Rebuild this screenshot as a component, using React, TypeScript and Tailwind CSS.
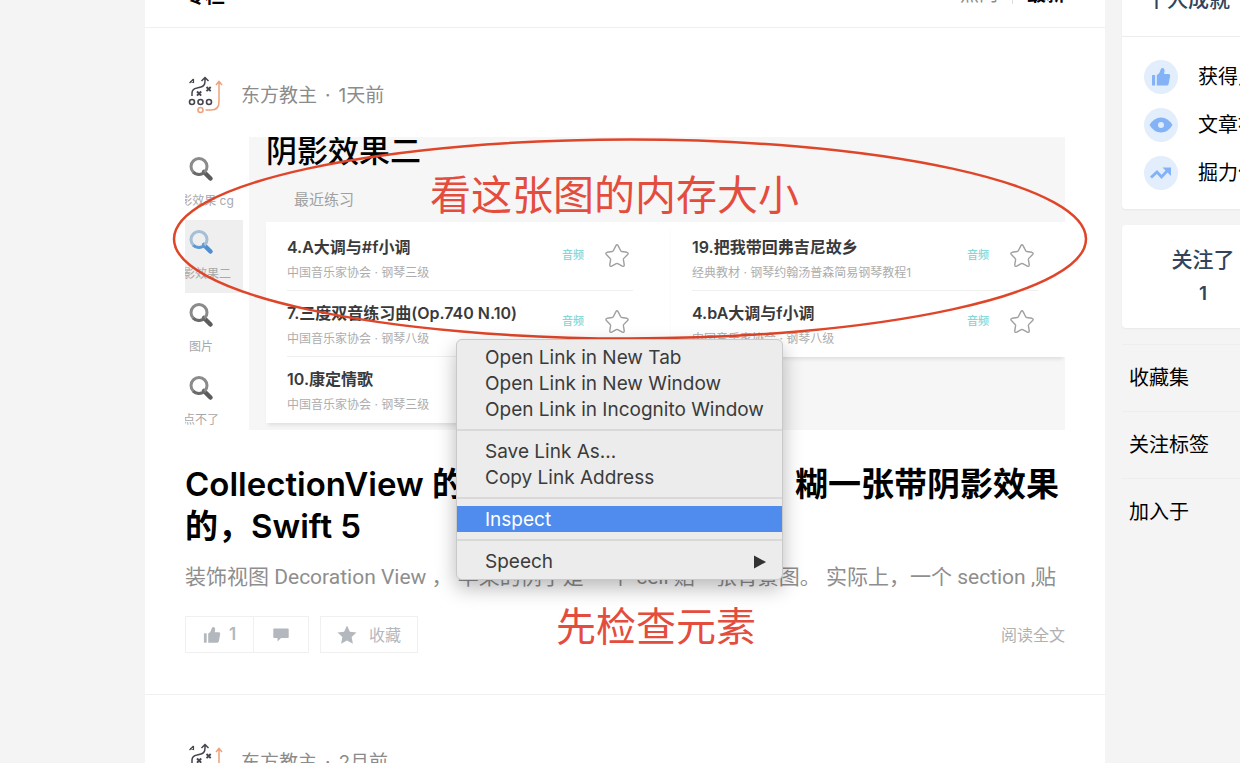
import { Fragment } from "react";
import clsx from "clsx";

type Song = { title: string; sub: string; tagged: boolean };

const leftSongs: Song[] = [
  { title: "4.A大调与#f小调", sub: "中国音乐家协会 · 钢琴三级", tagged: true },
  { title: "7.三度双音练习曲(Op.740 N.10)", sub: "中国音乐家协会 · 钢琴八级", tagged: true },
  { title: "10.康定情歌", sub: "中国音乐家协会 · 钢琴三级", tagged: false },
];

const rightSongs: Song[] = [
  { title: "19.把我带回弗吉尼故乡", sub: "经典教材 · 钢琴约翰汤普森简易钢琴教程1", tagged: true },
  { title: "4.bA大调与f小调", sub: "中国音乐家协会 · 钢琴八级", tagged: true },
];

const previewTabs = ["阴影效果 cg", "阴影效果二", "图片", "点不了"];

const menuGroups = [
  ["Open Link in New Tab", "Open Link in New Window", "Open Link in Incognito Window"],
  ["Save Link As...", "Copy Link Address"],
  ["Inspect"],
  ["Speech"],
];

function Avatar() {
  return (
    <svg viewBox="0 0 40 40" className="size-10" fill="none" aria-hidden="true">
      <g stroke="#45454f" strokeWidth="1.5">
        <path d="M7 21v-3q0-4 5-5l4-1q4-1 4-6V3M16.500 6l3.500-3.500L23.500 6" />
        <path d="M4.500 8l4-4M5 6.500l3.500 1V4" strokeWidth="1.200" />
        <path d="M12 16.500l4.200 4.200M16.200 16.500l-4.200 4.200M21.500 12l4.200 4.200M25.700 12l-4.200 4.200" strokeWidth="1.900" />
        <circle cx="7" cy="27" r="2.500" strokeWidth="1.600" />
        <circle cx="15.500" cy="27" r="2.500" strokeWidth="1.600" />
        <circle cx="24" cy="27" r="2.500" strokeWidth="1.600" />
      </g>
      <g stroke="#eba27c" strokeWidth="1.500">
        <circle cx="15.500" cy="35" r="2.500" strokeWidth="1.600" />
        <path d="M20.500 35H26q8 0 8-8V7M31 10l3-3.500 3 3.500" />
      </g>
    </svg>
  );
}

function Magnifier({ active }: { active: boolean }) {
  return (
    <svg viewBox="0 0 28 28" className="size-7" fill="none" aria-hidden="true">
      <path d="M17 17l6.500 6.500" stroke={active ? "#4f8fd0" : "#5c5c5c"} strokeWidth="4.500" strokeLinecap="round" />
      <circle cx="12" cy="11.500" r="8" stroke={active ? "#a5bfd6" : "#8b8b8b"} strokeWidth="3" />
      <path d="M6.300 17.200a8 8 0 0 0 11.400 0" stroke={active ? "#5f98d2" : "#6a6a6a"} strokeWidth="3" />
    </svg>
  );
}

function OutlineStar() {
  return (
    <svg viewBox="0 0 24 24" className="size-[26px]" fill="none" stroke="#a0a0a0" strokeWidth="1.300" strokeLinejoin="round" aria-hidden="true">
      <path d="M10.900 2.600q1.100-1.900 2.200 0l2.300 4.600q.3.600 1 .7l4.700.7q1.900.5.700 2l-3.500 3.600q-.5.500-.4 1.200l.8 4.700q0 2-1.800 1.300L12.700 19q-.7-.3-1.400 0l-4.200 2.400q-1.800.7-1.800-1.300l.8-4.700q.1-.7-.4-1.200l-3.500-3.600q-1.200-1.500.7-2l4.700-.7q.7-.1 1-.7z" />
    </svg>
  );
}

function ThumbIcon({ className }: { className: string }) {
  return (
    <svg viewBox="0 0 20 20" className={className} fill="currentColor" aria-hidden="true">
      <path d="M1 8.500Q1 8 1.500 8H3.600q.5 0 .5.500V18q0 .5-.5.500H1.500Q1 18.500 1 18z" />
      <path d="M5.800 8.300Q9 6.500 9.500 3q.3-2 1.900-2 2.400.3 2.100 3.500L13 7h4.600q1.800.2 1.500 2l-1.500 8q-.4 1.500-1.900 1.500H5.800z" />
    </svg>
  );
}

function EyeIcon() {
  return (
    <svg viewBox="0 0 24 16" className="w-6" aria-hidden="true">
      <path d="M0.500 8Q5 .5 12 .5T23.500 8Q19 15.500 12 15.500T.5 8z" fill="currentColor" />
      <circle cx="12" cy="8" r="3" fill="#dfecfb" />
    </svg>
  );
}

function TrendIcon() {
  return (
    <svg viewBox="0 0 22 14" className="w-[22px]" fill="none" aria-hidden="true">
      <path d="M1 11.500l6-5.500 4.500 5L18 4" stroke="currentColor" strokeWidth="2.800" />
      <path d="M12.500 1.500H21V10z" fill="currentColor" />
    </svg>
  );
}

function AuthorLine({ time }: { time: string }) {
  return (
    <div className="flex h-10 items-center gap-4 text-[19px] text-[#8b8b8b]">
      <Avatar />
      <div className="flex items-center gap-2 pt-0.5">
        <a href="#">东方教主</a>
        <span>·</span>
        <span>{time}</span>
      </div>
    </div>
  );
}

function SongList({ songs }: { songs: Song[] }) {
  return (
    <ul className="bg-white pl-[21px] pt-[3px] shadow-[0_4px_4px_-2px_rgba(0,0,0,0.1)]">
      {songs.map((song, i) => (
        <li
          key={song.title}
          className={clsx(
            "flex h-[66px] w-[346px] items-center border-b pt-1",
            i === songs.length - 1 ? "border-white" : "border-[#efefef]"
          )}
        >
          <div className="min-w-0 flex-1 whitespace-nowrap">
            <p className="text-base leading-[26px] font-semibold text-[#3a3a3a]">{song.title}</p>
            <p className="text-xs leading-[26px] text-[#adadad]">{song.sub}</p>
          </div>
          {song.tagged && (
            <div className="flex items-center gap-5 pr-[3px] pb-2">
              <span className="text-[11px] font-medium text-[#84d8d8]">音频</span>
              <OutlineStar />
            </div>
          )}
        </li>
      ))}
    </ul>
  );
}

function Preview() {
  return (
    <div className="flex h-[293px] overflow-hidden">
      <ul className="w-16 shrink-0 pt-[10px]">
        {previewTabs.map((tab, i) => (
          <li key={tab} className={clsx("h-[73px] w-[58px] pt-2", i === 1 && "bg-[#efefef]")}>
            <div className="flex w-8 flex-col items-center gap-2">
              <Magnifier active={i === 1} />
              <span className="text-xs leading-5 whitespace-nowrap text-[#a8a8a8]">{tab}</span>
            </div>
          </li>
        ))}
      </ul>
      <div className="min-w-0 flex-1 bg-[#f6f6f6] pl-[17px]">
        <p className="-mt-2 text-[31px] leading-[44px] font-medium text-black">阴影效果二</p>
        <p className="mt-4 pl-7 text-[15px] leading-[22px] text-[#a0a0a0]">最近练习</p>
        <div className="mt-[11px] grid grid-cols-[405px_1fr] items-start">
          <SongList songs={leftSongs} />
          <SongList songs={rightSongs} />
        </div>
      </div>
    </div>
  );
}

function ContextMenu() {
  return (
    <div
      role="menu"
      className="absolute top-[311px] left-[311px] w-[327px] rounded-md border border-[#c9c9c9] bg-[#ececec] pt-1 pb-[5px] font-['Inter','Noto_Sans_CJK_SC',sans-serif] text-[19px] text-[#3b3b3b] shadow-[0_8px_20px_rgba(0,0,0,0.28)]"
    >
      {menuGroups.map((group, i) => (
        <Fragment key={group[0]}>
          {i > 0 && <hr className="my-[7px] border-t-2 border-[#d9d9d9]" />}
          {group.map((label) => (
            <button
              key={label}
              type="button"
              role="menuitem"
              className={clsx(
                "flex h-[26px] w-full items-center justify-between pt-0.5 pr-4 pl-7 whitespace-nowrap",
                label === "Inspect" && "bg-[#508cee] text-white"
              )}
            >
              {label}
              {label === "Speech" && (
                <svg viewBox="0 0 12 14" className="h-3.5 w-3" aria-hidden="true">
                  <path d="M0 0.500L12 7L0 13.500z" fill="#333" />
                </svg>
              )}
            </button>
          ))}
        </Fragment>
      ))}
    </div>
  );
}

function Article() {
  return (
    <article className="relative border-b border-[#f0f0f0] px-10 pt-[47px] pb-[41px]">
      <AuthorLine time="1天前" />
      <div className="relative mt-[22px]">
        <Preview />
        <svg
          viewBox="0 0 916 204"
          preserveAspectRatio="none"
          className="absolute top-0 -left-[13px] h-[204px] w-[calc(100%+36px)]"
          fill="none"
          aria-hidden="true"
        >
          <ellipse cx="458" cy="102" rx="456" ry="99.500" stroke="#df4529" strokeWidth="2.500" />
        </svg>
        <p className="absolute top-7 left-[245px] text-[41px] leading-[60px] whitespace-nowrap text-[#e44d3e]">看这张图的内存大小</p>
      </div>
      <h2 className="mt-[33px] text-[33px] leading-[42px] font-semibold text-black">
        <a href="#">CollectionView 的装饰视图使用小例子，糊一张带阴影效果的，Swift 5</a>
      </h2>
      <p className="mt-4 overflow-hidden font-['Roboto','Noto_Sans_CJK_SC',sans-serif] text-[21px] leading-7 whitespace-nowrap text-[#8e8e8e]">
        装饰视图 Decoration View ， 苹果的例子是 一个 cell 贴一张背景图。 实际上，一个 section ,贴
      </p>
      <div className="mt-[25px] flex h-[37px] items-stretch text-base text-[#b2b8bd]">
        <button type="button" className="flex w-[69px] items-center justify-center gap-2 border border-[#f0f0f0] text-[17px] font-semibold">
          <ThumbIcon className="size-[18px]" />1
        </button>
        <button type="button" aria-label="评论" className="flex w-[55px] items-center justify-center border border-l-0 border-[#f0f0f0]">
          <svg viewBox="0 0 16 14" className="h-3.5 w-4" fill="currentColor" aria-hidden="true">
            <path d="M1 0.500H15q.7 0 .7.700v8q0 .7-.7.700H8L4.500 13.500V9.900H1q-.7 0-.7-.7v-8Q.3.5 1 .5z" />
          </svg>
        </button>
        <button type="button" className="ml-[11px] flex w-[98px] items-center justify-center gap-3 border border-[#f0f0f0]">
          <svg viewBox="0 0 20 20" className="size-5" fill="currentColor" aria-hidden="true">
            <path d="M10 .5l2.900 6.200 6.600.8-4.900 4.600 1.300 6.700L10 15.500l-5.900 3.300 1.300-6.700L.5 7.500l6.600-.8z" />
          </svg>
          收藏
        </button>
        <a href="#" className="ml-auto self-center text-[#b0b0b0]">阅读全文</a>
      </div>
      <p className="absolute top-[569px] left-[411px] text-[40px] leading-[60px] whitespace-nowrap text-[#e44d3e]">先检查元素</p>
      <ContextMenu />
    </article>
  );
}

function Sidebar() {
  const stats = [
    { label: "获得点赞", icon: <ThumbIcon className="size-5" /> },
    { label: "文章被阅读", icon: <EyeIcon /> },
    { label: "掘力值", icon: <TrendIcon /> },
  ];

  return (
    <aside className="w-[118px] shrink-0">
      <div className="w-[324px]">
        <section className="rounded-sm bg-white pb-3 shadow-[0_1px_2px_rgba(0,0,0,0.05)]">
          <h2 className="flex h-[73px] items-center border-b border-[#ececec] pl-6 text-[21px] font-medium text-[#31445b]">个人成就</h2>
          <ul className="pt-4 text-xl text-black">
            {stats.map((stat) => (
              <li key={stat.label} className="flex h-12 items-center gap-5 pl-[22px]">
                <span className="flex size-[34px] items-center justify-center rounded-full bg-[#e2eefc] text-[#83b2f7]">{stat.icon}</span>
                {stat.label}
              </li>
            ))}
          </ul>
        </section>
        <section className="mt-4 grid h-[103px] grid-cols-2 rounded-sm bg-white text-center font-medium text-[#31445b] shadow-[0_1px_2px_rgba(0,0,0,0.05)]">
          {["关注了", "关注者"].map((label) => (
            <a key={label} href="#" className="pt-[19px]">
              <p className="text-[21px] leading-8">{label}</p>
              <p className="text-[19px] leading-9 font-semibold">1</p>
            </a>
          ))}
        </section>
        <nav className="mt-4 text-xl text-black">
          {["收藏集", "关注标签", "加入于"].map((label) => (
            <a key={label} href="#" className="flex h-[67px] items-center border-t border-[#eeeeee] pl-[7px]">
              {label}
            </a>
          ))}
        </nav>
      </div>
    </aside>
  );
}

export default function App() {
  return (
    <div className="h-screen overflow-hidden bg-[#f4f4f4] font-['Inter','Noto_Sans_CJK_SC',sans-serif]">
      <div className="-mt-9 flex gap-[17px] pl-[145px]">
        <main className="min-w-0 flex-1 bg-white">
          <header className="flex h-16 items-center border-b border-[#f0f0f0] px-10">
            <h1 className="text-xl font-bold text-black">专栏</h1>
            <div className="ml-auto flex items-center gap-3.5 text-[19px] text-[#8b8b8b]">
              <a href="#">热门</a>
              <span className="h-4 w-px bg-[#dddddd]" />
              <a href="#" className="font-bold text-black">最新</a>
            </div>
          </header>
          <Article />
          <article className="px-10 pt-[47px] pb-10">
            <AuthorLine time="2月前" />
          </article>
        </main>
        <Sidebar />
      </div>
    </div>
  );
}
